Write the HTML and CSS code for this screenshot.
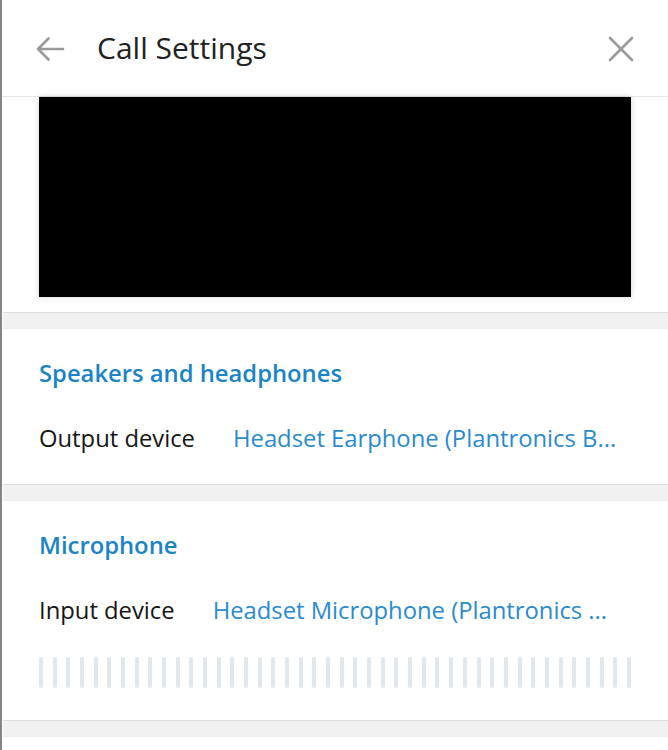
FILE: index.html
```html
<!DOCTYPE html>
<html>
<head>
<meta charset="utf-8">
<link rel="stylesheet" href="styles.css">
</head>
<body>
<div class="panel">
  <header class="header">
    <button class="icon-btn back" aria-label="Back">
      <svg width="30" height="26" viewBox="0 0 30 26"><path d="M28 13H3M13.5 2.5L3 13l10.5 10.5" fill="none" stroke="#9a9a9a" stroke-width="2.6" stroke-linecap="round" stroke-linejoin="round"/></svg>
    </button>
    <h1 class="title">Call Settings</h1>
    <button class="icon-btn close" aria-label="Close">
      <svg width="26" height="26" viewBox="0 0 26 26"><path d="M2 2L24 24M24 2L2 24" fill="none" stroke="#9a9a9a" stroke-width="2.6" stroke-linecap="round"/></svg>
    </button>
  </header>
  <section class="preview-section">
    <div class="preview"></div>
  </section>
  <div class="divider"></div>
  <section class="section">
    <div class="section-title">Speakers and headphones</div>
    <div class="row">
      <span class="label">Output device</span>
      <span class="value">Headset Earphone (Plantronics B...</span>
    </div>
  </section>
  <div class="divider"></div>
  <section class="section mic">
    <div class="section-title">Microphone</div>
    <div class="row">
      <span class="label">Input device</span>
      <span class="value">Headset Microphone (Plantronics ...</span>
    </div>
    <div class="levels">
      <i></i><i></i><i></i><i></i><i></i><i></i><i></i><i></i><i></i><i></i><i></i>
      <i></i><i></i><i></i><i></i><i></i><i></i><i></i><i></i><i></i><i></i><i></i>
      <i></i><i></i><i></i><i></i><i></i><i></i><i></i><i></i><i></i><i></i><i></i>
      <i></i><i></i><i></i><i></i><i></i><i></i><i></i><i></i><i></i><i></i><i></i>
    </div>
  </section>
  <div class="divider"></div>
  <section class="section tail"></section>
</div>
</body>
</html>
```
FILE: styles.css
```css
* { box-sizing: border-box; }
html, body { margin: 0; padding: 0; background: #fff; }
body {
  font-family: "Open Sans", "Noto Sans", "DejaVu Sans", sans-serif;
  width: 668px;
  height: 750px;
  overflow: hidden;
}
.panel {
  width: 668px;
  min-height: 750px;
  border-left: 2px solid #858585;
  background: #fff;
}
.header {
  height: 97px;
  display: flex;
  align-items: center;
  border-bottom: 1px solid #e6e6e6;
  padding: 0 34px 0 33px;
}
.icon-btn {
  border: 0;
  background: none;
  padding: 0;
  display: flex;
  align-items: center;
  justify-content: center;
}
.back { width: 30px; height: 26px; margin-top: 1px; }
.close { width: 26px; height: 26px; margin-left: auto; margin-top: 2px; }
.title {
  margin: 0 0 0 32px;
  font-size: 30px;
  line-height: 40px;
  font-weight: 400;
  color: #222;
}
.preview-section {
  padding: 0 37px 15px 37px;
}
.preview {
  height: 200px;
  background: #000;
  box-shadow: 0 0 6px rgba(0, 0, 0, 0.18);
}
.divider {
  height: 17px;
  background: #f1f1f1;
  border-top: 1px solid #dedede;
  border-bottom: 1px solid #ececec;
  margin-left: 1px;
}
.section {
  padding: 29px 37px 30px 37px;
}
.section-title {
  font-size: 23.8px;
  line-height: 31px;
  font-weight: 600;
  color: #1a84c6;
}
.row {
  display: flex;
  margin-top: 34px;
  font-size: 23.8px;
  line-height: 31px;
  white-space: nowrap;
}
.label { color: #161616; }
.value { color: #2a8bce; margin-left: 38px; }
.mic { padding-bottom: 32px; }
.levels {
  margin-top: 31px;
  height: 31px;
  width: 592px;
  display: flex;
  justify-content: space-between;
}
.levels i {
  display: block;
  width: 4px;
  height: 31px;
  border-radius: 2px;
  background: #e0e7ed;
}
.tail { height: 20px; padding: 0; }
```
